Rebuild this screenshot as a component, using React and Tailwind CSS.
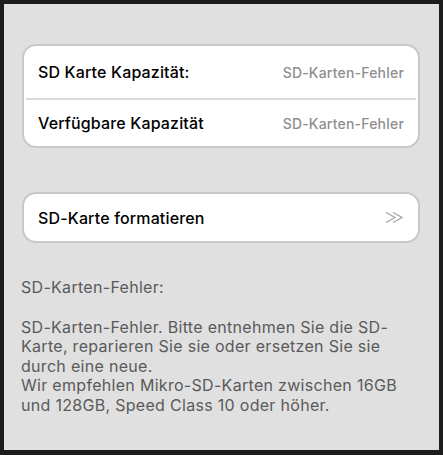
export default function App() {
  return (
    <div className="w-[443px] h-[455px] bg-[#1c1c1c] pt-[4px] pl-[4px] pr-[4px] pb-[5px]" style={{ fontFamily: "Inter, 'Noto Sans', sans-serif" }}>
      <div className="h-full bg-[#e0e0e0] pt-[40px] pl-[18px] pr-[19px]">
        <div className="rounded-[14px] border-2 border-[#c8c8c8] bg-white">
          <div className="flex items-center justify-between h-[52px] pl-[14px] pr-[14px]">
            <span className="text-[16px] font-medium tracking-[0.15px] text-black">SD Karte Kapazität:</span>
            <span className="text-[14px] font-medium tracking-[0.2px] text-[#8e8e8e]">SD-Karten-Fehler</span>
          </div>
          <div className="h-[2px] bg-[#dadada] mx-[2px]" />
          <div className="flex items-center justify-between h-[46px] pl-[14px] pr-[14px]">
            <span className="text-[16px] font-medium tracking-[0.15px] text-black">Verfügbare Kapazität</span>
            <span className="text-[14px] font-medium tracking-[0.2px] text-[#8e8e8e]">SD-Karten-Fehler</span>
          </div>
        </div>

        <div className="mt-[44px] rounded-[14px] border-2 border-[#c8c8c8] bg-white flex items-center justify-between h-[51px] pl-[14px] pr-[15px]">
          <span className="text-[16px] font-medium tracking-[0.15px] text-black">SD-Karte formatieren</span>
          <svg width="18" height="11" viewBox="0 0 18 11" fill="none" stroke="#a8a8a8" strokeWidth="1.3">
            <polyline points="1,0.5 10,5.5 1,10.5" />
            <polyline points="8,0.5 17,5.5 8,10.5" />
          </svg>
        </div>

        <div className="mt-[35px] -ml-[1px] text-[16px] leading-[19.5px] tracking-[0.3px] text-[#5a5a5a]">
          <p>SD-Karten-Fehler:</p>
          <p className="mt-[20px]">
            SD-Karten-Fehler. Bitte entnehmen Sie die SD-Karte, reparieren Sie sie oder ersetzen Sie sie durch eine neue.
          </p>
          <p>Wir empfehlen Mikro-SD-Karten zwischen 16GB und 128GB, Speed Class 10 oder höher.</p>
        </div>
      </div>
    </div>
  );
}
